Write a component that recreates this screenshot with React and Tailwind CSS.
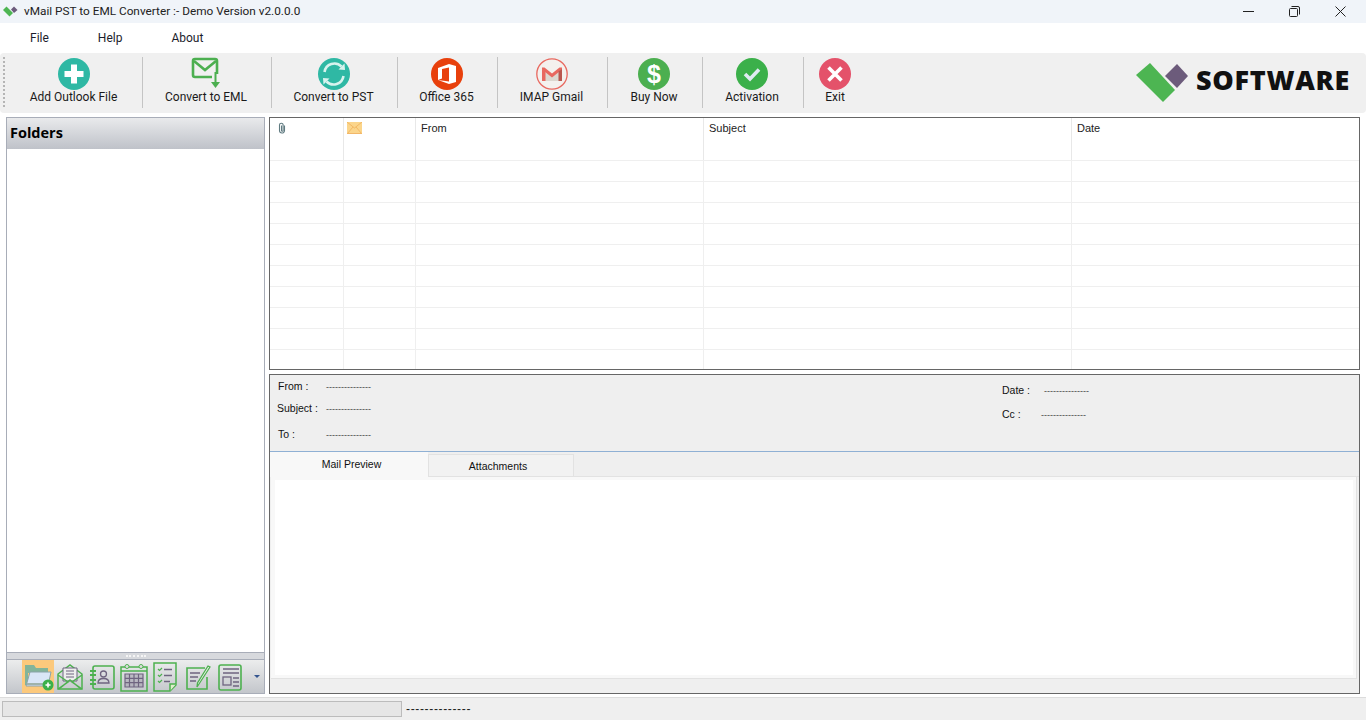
const Sep = () => <div className="w-px h-[51px] bg-[#c4c4c4] shrink-0" />;

const ToolBtn = ({ w, label, children }) => (
  <div className="flex flex-col items-center shrink-0 h-[52px] pr-[2px]" style={{ width: w }}>
    <div className="h-[33px] w-[36px] flex items-center justify-center">{children}</div>
    <span className="mt-[-1px] text-[12px] leading-[16px] text-[#1a1a1a] whitespace-nowrap">{label}</span>
  </div>
);

const AddIcon = () => (
  <svg width="32" height="32" viewBox="0 0 32 32">
    <circle cx="16" cy="16" r="16" fill="#2fb8a4" />
    <path d="M13 6.500h6V13h6.500v6H19v6.500h-6V19H6.500v-6H13z" fill="#fff" />
  </svg>
);

const EmlIcon = () => (
  <svg width="32" height="33" viewBox="0 0 32 33" fill="none">
    <path d="M22 20H5a2 2 0 0 1-2-2V4a2 2 0 0 1 2-2h20a2 2 0 0 1 2 2v13" stroke="#4caf50" strokeWidth="2.600" />
    <path d="M4 4l11 9 11-9" stroke="#4caf50" strokeWidth="2.600" />
    <path d="M25.500 15v11" stroke="#4caf50" strokeWidth="2" />
    <path d="M21 25h9l-4.500 6z" fill="#4caf50" />
  </svg>
);

const PstIcon = () => (
  <svg width="32" height="32" viewBox="0 0 32 32" fill="none">
    <circle cx="16" cy="16" r="16" fill="#2fb8a4" />
    <path d="M6.500 14a10 10 0 0 1 17-5.500" stroke="#d8f3ee" strokeWidth="2.600" />
    <path d="M20.500 11.500l6.500.5-.5-6.500z" fill="#d8f3ee" />
    <path d="M25.500 18a10 10 0 0 1-17 5.500" stroke="#d8f3ee" strokeWidth="2.600" />
    <path d="M11.500 20.500l-6.500-.5.5 6.500z" fill="#d8f3ee" />
  </svg>
);

const OfficeIcon = () => (
  <svg width="32" height="32" viewBox="0 0 32 32">
    <circle cx="16" cy="16" r="16" fill="#e8400c" />
    <path d="M7 10l11-4 7 2v16l-7 2-11-4 11 1.500V9.500l-7 1.500v9.500L7 22z" fill="#fff" />
  </svg>
);

const GmailIcon = () => (
  <svg width="32" height="32" viewBox="0 0 32 32" fill="none">
    <circle cx="16" cy="16" r="15.200" fill="#f4f1ee" stroke="#e8685f" strokeWidth="1.300" />
    <path d="M6 10l10 8 10-8v13H6z" fill="#dcd8d0" />
    <path d="M6 9.500h2.500L16 15.500l7.500-6H26v2L16 19.500 6 11.500z" fill="#e8685f" />
    <path d="M6 11v12h3.500V13.500z" fill="#e8685f" />
    <path d="M26 11v12h-3.500V13.500z" fill="#b9574f" />
  </svg>
);

const BuyIcon = () => (
  <svg width="32" height="32" viewBox="0 0 32 32">
    <circle cx="16" cy="16" r="16" fill="#4caf50" />
    <text x="16" y="24.500" textAnchor="middle" fontSize="25" fontWeight="700" fill="#fff" fontFamily="'Liberation Sans', sans-serif">$</text>
  </svg>
);

const ActivationIcon = () => (
  <svg width="32" height="32" viewBox="0 0 32 32" fill="none">
    <circle cx="16" cy="16" r="16" fill="#3bb04a" />
    <path d="M9 16l5 5 9-9.500" stroke="#dfeaf2" strokeWidth="3.600" />
  </svg>
);

const ExitIcon = () => (
  <svg width="32" height="32" viewBox="0 0 32 32" fill="none">
    <circle cx="16" cy="16" r="16" fill="#e4526a" />
    <path d="M9.500 9.500l13 13M22.500 9.500l-13 13" stroke="#fff" strokeWidth="3.600" />
  </svg>
);

const G = '#4db14f';
const P = '#6f6480';

const FolderIcon = () => (
  <div className="w-[32px] h-[33px] bg-[#fcc97c] flex items-center justify-center shrink-0">
    <svg width="31" height="31" viewBox="0 0 31 31">
      <path d="M2 4h9l2 3h12v5H2z" fill="#82b49a" />
      <path d="M2 6h3v18H2z" fill="#82b49a" />
      <path d="M7 11h21l-3 14H3z" fill="#d9e6f7" stroke="#8aa3a8" />
      <path d="M4 22h20v2H4z" fill="#9fb3ac" />
      <circle cx="25" cy="24" r="5.500" fill="#3bb04a" />
      <path d="M22.500 24h5M25 21.500v5" stroke="#fff" strokeWidth="1.600" />
    </svg>
  </div>
);

const NavIcon = ({ children }) => (
  <svg width="30" height="30" viewBox="0 0 30 30" fill="none" className="shrink-0">{children}</svg>
);

const MailsIcon = () => (
  <NavIcon>
    <path d="M3 12L15 3l12 9v15H3z" stroke={G} strokeWidth="1.500" />
    <path d="M8 6h14v13H8z" fill="#eee" stroke={P} strokeWidth="1" />
    <path d="M11 9h8M11 12h8M11 15h8" stroke={P} strokeWidth="1.200" />
    <path d="M3 13l10 7-10 7M27 13l-10 7 10 7M4 27l11-9 11 9" stroke={G} strokeWidth="1.500" />
  </NavIcon>
);

const ContactIcon = () => (
  <NavIcon>
    <rect x="6" y="4" width="21" height="23" rx="2" stroke={G} strokeWidth="1.600" />
    <path d="M3 9h6M3 13h6M3 18h6M3 22h6" stroke={G} strokeWidth="1.800" />
    <circle cx="16.500" cy="12" r="3" stroke={P} strokeWidth="1.300" />
    <path d="M11 21c0-3.500 2-4.500 5.500-4.500s5.500 1 5.500 4.500z" stroke={P} strokeWidth="1.300" />
  </NavIcon>
);

const CalendarIcon = () => (
  <NavIcon>
    <rect x="2" y="5" width="26" height="24" stroke={G} strokeWidth="1.500" />
    <path d="M2 9h26" stroke={G} strokeWidth="1.500" />
    <circle cx="8" cy="4.500" r="2" fill="#ddd" stroke={G} />
    <circle cx="22" cy="4.500" r="2" fill="#ddd" stroke={G} />
    <path d="M6 12h18v13H6z" fill={P} opacity=".25" />
    <path d="M6 12h18v13H6zM6 16.300h18M6 20.600h18M10.500 12v13M15 12v13M19.500 12v13" stroke={P} strokeWidth="1.200" />
  </NavIcon>
);

const TasksIcon = () => (
  <NavIcon>
    <path d="M3 1h22v22l-6 6H3z" stroke={G} strokeWidth="1.500" />
    <path d="M25 22h-6v7" fill="#e0eecc" stroke={G} strokeWidth="1.500" />
    <path d="M7 7l1.500 1.500L11 6M7 13l1.500 1.500L11 12M7 19l1.500 1.500L11 18" stroke={G} strokeWidth="1.200" />
    <path d="M13 7.500h8M13 13.500h8M13 19.500h6" stroke={P} strokeWidth="1.500" />
  </NavIcon>
);

const NotesIcon = () => (
  <NavIcon>
    <path d="M24 15v12H4V6h18" stroke={G} strokeWidth="1.600" />
    <path d="M7 11h10M7 15h8M7 19h6" stroke={P} strokeWidth="1.400" />
    <path d="M27 5l-11 17-2 3 .5-4L25 4z" fill="#eee" stroke={G} strokeWidth="1.300" />
  </NavIcon>
);

const JournalIcon = () => (
  <NavIcon>
    <rect x="4" y="3" width="22" height="25" rx="2" stroke={G} strokeWidth="1.600" />
    <path d="M8 7h16M8 11h16" stroke={P} strokeWidth="1.300" />
    <rect x="8" y="15" width="8" height="8" stroke={P} strokeWidth="1.300" />
    <path d="M18 16h6M18 20h6M18 24h6" stroke={P} strokeWidth="1.300" />
  </NavIcon>
);

const Clip = () => (
  <svg width="8" height="12" viewBox="0 0 8 12" fill="none">
    <path d="M6.500 3.500v5a2.500 2.500 0 0 1-5 0V3a1.800 1.800 0 0 1 3.600 0v5.500a.8.800 0 0 1-1.600 0V3.500" stroke="#5f7a80" strokeWidth="1.100" />
  </svg>
);

const Envelope = () => (
  <svg width="15" height="12" viewBox="0 0 15 12">
    <rect width="15" height="12" fill="#fbd58b" />
    <path d="M0 0l7.500 6L15 0M0 12l6-7M15 12L9 5" stroke="#f0b05a" fill="none" strokeWidth=".8" />
    <path d="M0 11h15v1H0z" fill="#f2b769" />
  </svg>
);

const Logo = () => (
  <svg width="53" height="40" viewBox="0 0 53 40" className="shrink-0">
    <path d="M0 12L14 0l25 27-12 12z" fill="#4db552" />
    <path d="M29 13L41 1l11 12-11 12z" fill="#6c5b7b" />
  </svg>
);

const columns = ['w-[74px]', 'w-[72px]', 'w-[288px]', 'w-[368px]', 'flex-1'];
const headers = [<Clip key="c" />, <Envelope key="e" />, 'From', 'Subject', 'Date'];
const pads = ['pl-[8px]', 'pl-[3px]', 'pl-[5px]', 'pl-[5px]', 'pl-[5px]'];
const rows = Array.from({ length: 10 });

const Dash = () => <span className="text-[9px] leading-[10px] text-[#444]">---------------</span>;

export default function App() {
  return (
    <div className="w-[1366px] h-[720px] flex flex-col bg-white overflow-hidden text-[#111] font-['Roboto','Open_Sans',sans-serif]">
      {/* title bar */}
      <div className="h-[23px] bg-[#f0f4f9] flex items-center pl-[3px] shrink-0">
        <svg width="15" height="11" viewBox="0 0 15 11">
          <path d="M0 4l3.500-3.500 6.500 6.500-3.500 3.500z" fill="#4db552" />
          <path d="M8 3.500L11 .5l3.500 3.500L11 7z" fill="#6c5b7b" />
        </svg>
        <span className="ml-[6px] text-[11.800px] text-[#222]">vMail PST to EML Converter :- Demo Version v2.0.0.0</span>
        <div className="ml-auto flex items-center gap-[35px] pr-[20px]">
          <svg width="11" height="11" viewBox="0 0 11 11" fill="none" stroke="#222">
            <path d="M0 5.500h11" />
          </svg>
          <svg width="11" height="11" viewBox="0 0 11 11" fill="none" stroke="#222">
            <rect x=".5" y="2.500" width="8" height="8" rx="1" />
            <path d="M2.500.5h6.500a1.500 1.500 0 0 1 1.500 1.500v6.500" />
          </svg>
          <svg width="11" height="11" viewBox="0 0 11 11" fill="none" stroke="#222">
            <path d="M.5.5l10 10M10.500.5l-10 10" />
          </svg>
        </div>
      </div>

      {/* menu */}
      <div className="h-[30px] flex items-center shrink-0 pl-[30px] gap-[49px] text-[12px] text-[#1c1c2c]">
        <span>File</span>
        <span>Help</span>
        <span>About</span>
      </div>

      {/* toolbar */}
      <div className="h-[60px] bg-[#f0f0f0] rounded-[4px] flex items-start pt-[4px] shrink-0 pl-[3px] pr-[16px]">
        <div className="w-[2px] h-[50px] border-l-2 border-dotted border-[#b5b5b5] mr-[2px]" />
        <ToolBtn w={135} label="Add Outlook File"><AddIcon /></ToolBtn>
        <Sep />
        <ToolBtn w={128} label="Convert to EML"><EmlIcon /></ToolBtn>
        <Sep />
        <ToolBtn w={125} label="Convert to PST"><PstIcon /></ToolBtn>
        <Sep />
        <ToolBtn w={99} label="Office 365"><OfficeIcon /></ToolBtn>
        <Sep />
        <ToolBtn w={109} label="IMAP Gmail"><GmailIcon /></ToolBtn>
        <Sep />
        <ToolBtn w={94} label="Buy Now"><BuyIcon /></ToolBtn>
        <Sep />
        <ToolBtn w={100} label="Activation"><ActivationIcon /></ToolBtn>
        <Sep />
        <ToolBtn w={64} label="Exit"><ExitIcon /></ToolBtn>
        <div className="ml-auto flex items-center gap-[7px] mt-[6px]">
          <Logo />
          <span className="mb-[6px] font-['Open_Sans',sans-serif] text-[27px] leading-[34px] font-extrabold text-[#111] tracking-[0.700px]">SOFTWARE</span>
        </div>
      </div>

      {/* main */}
      <div className="flex-1 min-h-0 flex pt-[4px] pl-[6px] pr-[6px] pb-[3px] gap-[4px]">
        {/* folders */}
        <div className="w-[259px] shrink-0 border border-[#a8adb8] flex flex-col">
          <div className="h-[31px] bg-gradient-to-b from-[#e9eaec] to-[#bfc2c9] flex items-center pl-[3px] pb-[2px] shrink-0">
            <span className="font-['Open_Sans',sans-serif] text-[14.500px] font-bold text-black">Folders</span>
          </div>
          <div className="flex-1 bg-white" />
          <div className="h-[8px] bg-[#d7d9dd] border-y border-[#a8adb8] flex items-center justify-center shrink-0">
            <div className="w-[20px] border-t-2 border-dotted border-[#f5f5f5]" />
          </div>
          <div className="h-[33px] bg-gradient-to-b from-[#eceded] to-[#c3c6cb] flex items-center pl-[15px] shrink-0">
            <FolderIcon />
            <div className="flex items-center gap-[2px] ml-[1px]">
              <MailsIcon />
              <ContactIcon />
              <CalendarIcon />
              <TasksIcon />
              <NotesIcon />
              <JournalIcon />
            </div>
            <div className="ml-[9px] w-0 h-0 border-x-[3px] border-x-transparent border-t-[3px] border-t-[#33558f]" />
          </div>
        </div>

        {/* right side */}
        <div className="flex-1 min-w-0 flex flex-col gap-[4px]">
          <div className="h-[253px] border border-[#666] shrink-0 flex flex-col bg-white overflow-hidden">
            <div className="h-[43px] flex shrink-0 border-b border-[#efefef]">
              {headers.map((h, i) => (
                <div key={i} className={`${columns[i]} ${pads[i]} ${i < 4 ? 'border-r border-[#e8e8e8]' : ''} pt-[4px] text-[11px] leading-[13px] text-[#222] font-['Liberation_Sans',sans-serif]`}>{h}</div>
              ))}
            </div>
            {rows.map((_, r) => (
              <div key={r} className="h-[21px] flex shrink-0 border-b border-[#efefef] last:border-b-0">
                {columns.map((c, i) => (
                  <div key={i} className={`${c} ${i < 4 ? 'border-r border-[#efefef]' : ''}`} />
                ))}
              </div>
            ))}
          </div>

          <div className="flex-1 min-h-0 border border-[#666] bg-[#efefef] flex flex-col">
            <div className="h-[77px] shrink-0 border-b border-[#8fb0d4] flex justify-between font-['Liberation_Sans',sans-serif] text-[10.500px] text-[#111]">
              <div className="w-[300px] pl-[7px] pt-[5px] flex flex-col">
                <div className="flex items-center h-[13px]"><span className="w-[49px] pl-[1px]">From :</span><Dash /></div>
                <div className="flex items-center h-[13px] mt-[9px]"><span className="w-[49px]">Subject :</span><Dash /></div>
                <div className="flex items-center h-[13px] mt-[13px]"><span className="w-[49px] pl-[1px]">To :</span><Dash /></div>
              </div>
              <div className="w-[357px] pt-[9px] flex flex-col">
                <div className="flex items-center h-[13px]"><span className="w-[42px]">Date :</span><Dash /></div>
                <div className="flex items-center h-[13px] mt-[11px]"><span className="w-[39px]">Cc :</span><Dash /></div>
              </div>
            </div>
            <div className="h-[25px] flex shrink-0 font-['Liberation_Sans',sans-serif] text-[10.500px] text-[#111]">
              <div className="w-[158px] bg-[#f8f8f8] text-center pt-[5px] pl-[5px]">Mail Preview</div>
              <div className="w-[146px] mt-[2px] bg-[#f2f2f2] border border-[#e2e2e2] text-center pt-[4px] pr-[6px]">Attachments</div>
              <div className="flex-1 border-b border-[#e2e2e2]" />
            </div>
            <div className="flex-1 min-h-0 flex mx-[1px]">
              <div className="flex-1 bg-[#f8f8f8] border-r border-b border-[#e2e2e2] pl-[4px] pr-[3px] pt-[3px] pb-[3px] mb-[14px] mr-[1px]">
                <div className="h-full bg-white" />
              </div>
            </div>
          </div>
        </div>
      </div>

      {/* status */}
      <div className="h-[23px] bg-[#efefef] border-t border-[#dcdcdc] flex items-center pl-[2px] shrink-0">
        <div className="w-[400px] h-[16px] bg-[#e6e6e6] border border-[#bcbcbc]" />
        <span className="ml-[4px] text-[12px] tracking-[0.650px] text-[#222] font-['Liberation_Sans',sans-serif]">--------------</span>
      </div>
    </div>
  );
}
